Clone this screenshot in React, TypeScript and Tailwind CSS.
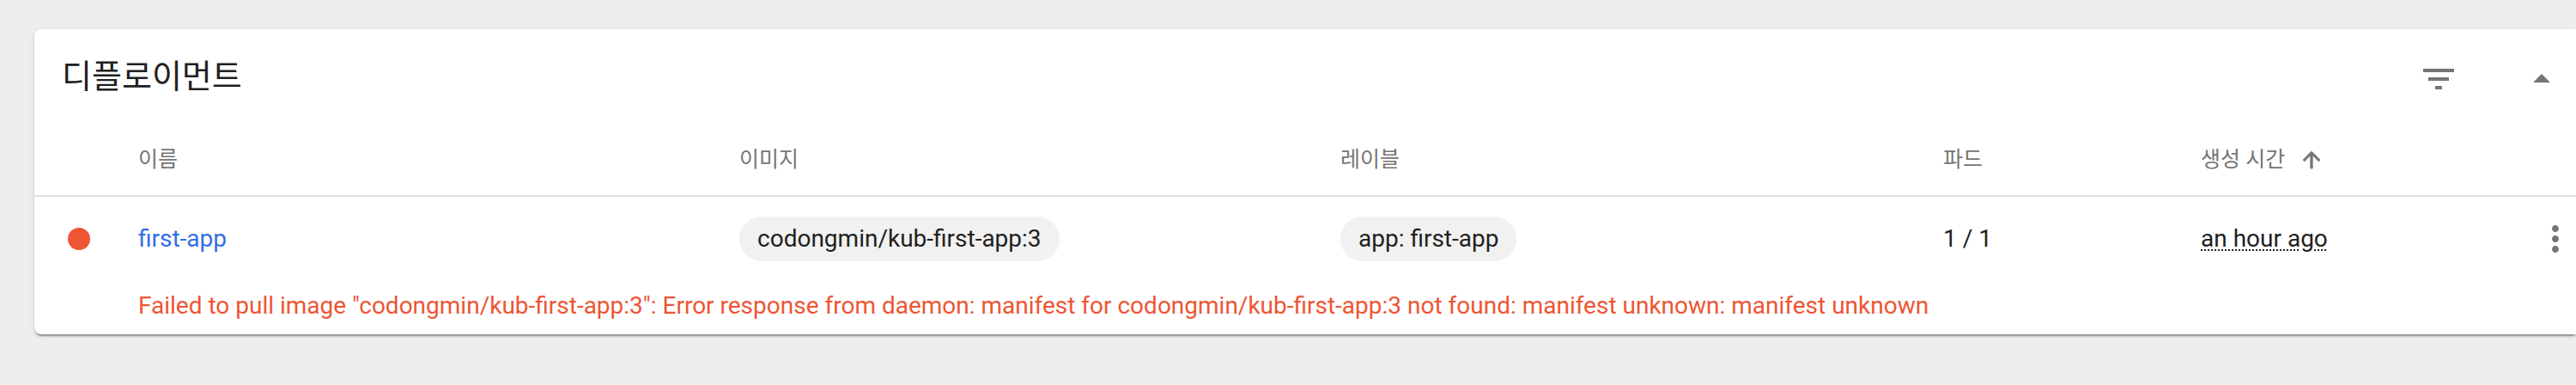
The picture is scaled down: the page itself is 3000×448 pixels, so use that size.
const font = "font-['Roboto','Noto_Sans_CJK_KR',sans-serif]"

function FilterIcon() {
  return (
    <svg viewBox="0 0 24 24" className="h-12 w-12 fill-[#757575]">
      <path d="M10 18h4v-2h-4v2zM3 6v2h18V6H3zm3 7h12v-2H6v2z" />
    </svg>
  )
}

function DropUpIcon() {
  return (
    <svg viewBox="0 0 24 24" className="h-12 w-12 fill-[#757575]">
      <path d="M7 14l5-5 5 5z" />
    </svg>
  )
}

function SortUpIcon() {
  return (
    <svg viewBox="0 0 24 24" className="h-[30px] w-[30px] fill-[#757575] stroke-[#757575] stroke-[0.6]">
      <path d="M4 12l1.41 1.41L11 7.83V20h2V7.83l5.58 5.59L20 12l-8-8-8 8z" />
    </svg>
  )
}

function MoreIcon() {
  return (
    <svg viewBox="0 0 24 24" className="h-12 w-12 fill-[#757575]">
      <path d="M12 8c1.1 0 2-.9 2-2s-.9-2-2-2-2 .9-2 2 .9 2 2 2zm0 2c-1.1 0-2 .9-2 2s.9 2 2 2 2-.9 2-2-.9-2-2-2zm0 6c-1.1 0-2 .9-2 2s.9 2 2 2 2-.9 2-2-.9-2-2-2z" />
    </svg>
  )
}

const cols = 'grid grid-cols-[121px_700px_700px_702px_300px_1fr_48px] items-center'

export default function App() {
  return (
    <div className={`min-h-[448px] bg-[#edeef0] pl-[40px] pt-[34px] ${font}`}>
      <div className="rounded-l-lg bg-white shadow-[0_4px_2px_-2px_rgba(0,0,0,0.25),0_2px_2px_0_rgba(0,0,0,0.14),0_2px_6px_0_rgba(0,0,0,0.1)]">
        {/* title bar */}
        <div className="flex h-[110px] items-center pl-[32px] pr-[16px]">
          <h1 className="text-[38px] leading-none text-[#212121]">디플로이먼트</h1>
          <div className="ml-auto mt-[6px] flex items-center gap-[72px]">
            <FilterIcon />
            <DropUpIcon />
          </div>
        </div>

        {/* header */}
        <div className={`${cols} h-[83px] text-[25px] text-[#757575]`}>
          <div />
          <div>이름</div>
          <div>이미지</div>
          <div>레이블</div>
          <div>파드</div>
          <div className="flex items-center gap-[16px]">
            <span>생성 시간</span>
            <SortUpIcon />
          </div>
          <div />
        </div>

        <div className="h-[2px] bg-[#e0e0e0]" />

        {/* row */}
        <div className={`${cols} h-[98px] text-[28px] text-[#212121]`}>
          <div className="pl-[39px]">
            <div className="h-[26px] w-[26px] rounded-full bg-[#ee5533]" />
          </div>
          <div className="text-[#326de6]">first-app</div>
          <div>
            <span className="inline-flex h-[52px] items-center rounded-full bg-[#f1f1f1] px-[21px]">
              codongmin/kub-first-app:3
            </span>
          </div>
          <div>
            <span className="inline-flex h-[52px] items-center rounded-full bg-[#f1f1f1] px-[21px]">
              app: first-app
            </span>
          </div>
          <div>1 / 1</div>
          <div>
            <span className="underline decoration-dotted decoration-2 underline-offset-[3px]">an hour ago</span>
          </div>
          <div className="flex justify-center">
            <MoreIcon />
          </div>
        </div>

        <div className="flex h-[62px] items-center pb-[4px] pl-[121px] text-[28px] text-[#ee5533]">
          Failed to pull image "codongmin/kub-first-app:3": Error response from daemon: manifest for
          codongmin/kub-first-app:3 not found: manifest unknown: manifest unknown
        </div>
      </div>
    </div>
  )
}
